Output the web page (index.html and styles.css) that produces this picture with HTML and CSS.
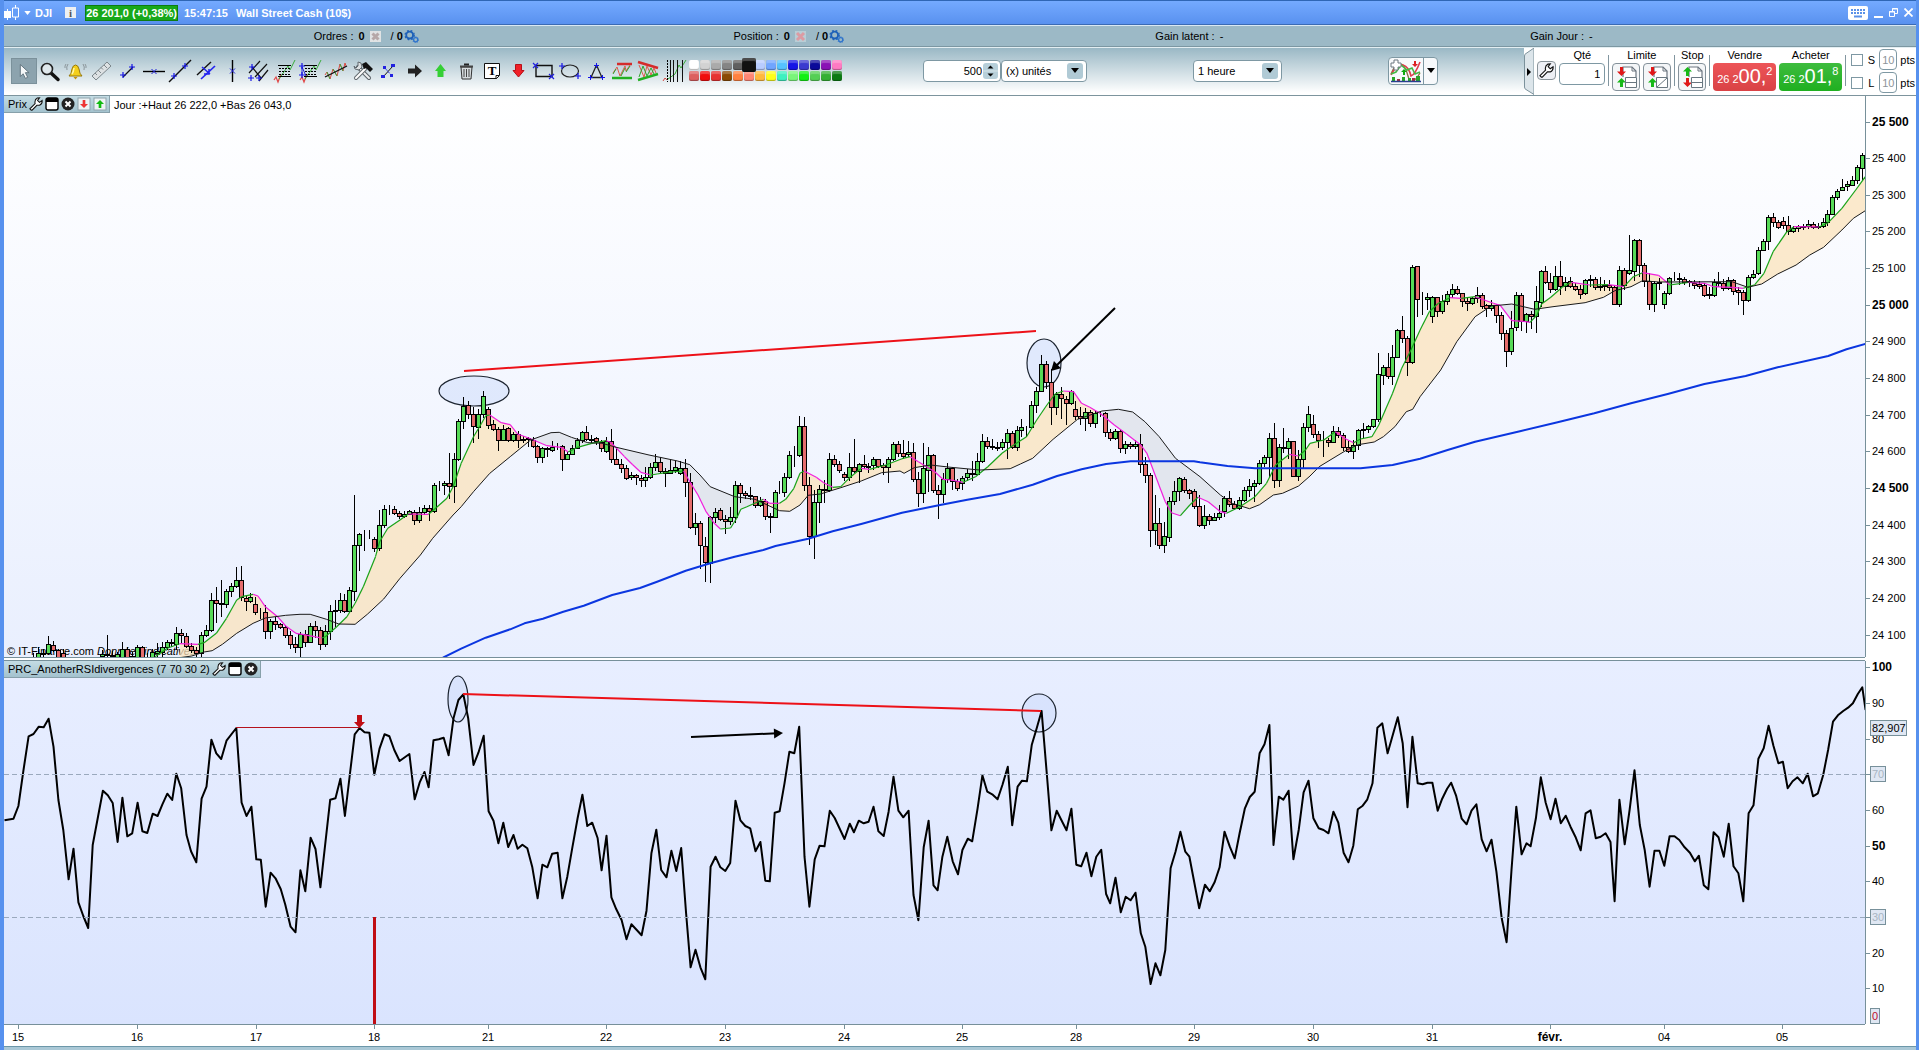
FILE: index.html
```html
<!DOCTYPE html>
<html lang="fr">
<head>
  <meta charset="UTF-8" />
  <meta name="viewport" content="width=device-width, initial-scale=1" />
  <title>DJI - Wall Street Cash (10$)</title>
  <link rel="stylesheet" href="styles.css">
</head>
<body>
  <!-- Shared icon parts -->
  <svg class="defs" width="0" height="0" aria-hidden="true">
    <defs>
      <symbol id="plus" viewBox="0 0 7 7"><path d="M3.5 0v7M0 3.5h7" stroke="#1414e6" stroke-width="1.4"/></symbol>
      <symbol id="wrench" viewBox="0 0 16 16"><path d="M2.500 15 L1 13.500 L7 7.500 Q6 3 9.500 1.200 L12 1 L9.800 4 L12 6.200 L15 4 Q15.500 8 12 9.500 L9 9.500 L3.500 15z" fill="#fff" stroke="#111" stroke-width="1.200"/></symbol>
      <symbol id="window" viewBox="0 0 14 14"><rect x="1" y="1" width="12" height="12" rx="2" fill="#fff" stroke="#000" stroke-width="1.4"/><path d="M1 1h12v4H1z"/></symbol>
      <symbol id="close" viewBox="0 0 14 14"><circle cx="7" cy="7" r="6.500" fill="#222"/><path d="M4.500 4.500l5 5M9.500 4.500l-5 5" stroke="#fff" stroke-width="2"/></symbol>
      <symbol id="down" viewBox="0 0 12 12"><path d="M4 0h4v6h4l-6 6-6-6h4z"/></symbol>
      <symbol id="up" viewBox="0 0 12 12"><path d="M4 12h4V6h4L6 0 0 6h4z"/></symbol>
      <symbol id="gears" viewBox="0 0 16 14"><circle cx="6" cy="5.500" r="3.700" fill="none" stroke="#1d60b8" stroke-width="2"/><circle cx="6" cy="5.500" r="5" fill="none" stroke="#1d60b8" stroke-width="1.300" stroke-dasharray="2 2"/><circle cx="12.500" cy="10.500" r="2.200" fill="none" stroke="#2f74cc" stroke-width="1.400"/><circle cx="12.500" cy="10.500" r="3.200" fill="none" stroke="#2f74cc" stroke-dasharray="1.200 1.200"/></symbol>
      <symbol id="caret" viewBox="0 0 8 5"><path d="M0 0h8L4 5z"/></symbol>
      <symbol id="fibo" viewBox="0 0 26 26"><path d="M3 22l2-3 2 5 3-8" fill="none" stroke="#e04848" stroke-width="1.200"/><path d="M8 21L17 8l2 4 5-10" fill="none" stroke="#39ad39"/><path d="M7 7.500h13M7 18.500h13" stroke="#000"/><path d="M8 10.500h12M8 13.500h12M8 16.500h12" stroke="#000" stroke-dasharray="2 1"/></symbol>
      <symbol id="sheet" viewBox="0 0 16 22"><path d="M1 11V1h9l4 4v6" fill="#fff" stroke="#6c7680" stroke-width="1.200"/><path d="M10 1v4h4" fill="none" stroke="#6c7680"/></symbol>
    </defs>
  </svg>

  <header class="titlebar">
    <svg class="logo" width="15" height="16" viewBox="0 0 15 16"><path d="M3.500 4v11" stroke="#fff"/><path d="M0 6h7v7H0z" fill="#fff"/><path d="M11.500 0v15" stroke="#fff"/><path d="M8.500 3h6v9h-6z" fill="#649df8" stroke="#fff"/></svg>
    <svg class="white" width="7" height="4"><use href="#caret"/></svg>
    <strong>DJI</strong>
    <button class="info" aria-label="Informations">i</button>
    <strong class="quote">26 201,0 (+0,38%)</strong>
    <strong>15:47:15</strong>
    <strong class="market">Wall Street Cash (10$)</strong>
    <div class="window-buttons">
      <button aria-label="Clavier"><svg width="20" height="14" viewBox="0 0 20 14"><rect width="20" height="14" rx="2" fill="#fff"/><path d="M3 4h14M3 7h14" stroke="#5b91e8" stroke-width="2" stroke-dasharray="2 1"/><path d="M6 10.500h8" stroke="#5b91e8" stroke-width="2"/></svg></button>
      <button aria-label="Réduire"><svg width="9" height="12"><path d="M0 10h9" stroke="#fff" stroke-width="2"/></svg></button>
      <button aria-label="Restaurer"><svg width="9" height="9" fill="none" stroke="#fff"><path d="M3.500 3V.500h5v5H6"/><path d="M.500 3.500h5v5h-5z"/><path d="M3 1h6M0 4h6"/></svg></button>
      <button aria-label="Fermer"><svg width="9" height="9"><path d="M.500.500l8 8M8.500.500l-8 8" stroke="#fff" stroke-width="1.800"/></svg></button>
    </div>
  </header>

  <section class="status">
    <div class="status-item">Ordres : <b>0</b>
      <svg width="11" height="11"><rect width="11" height="11" fill="#e0e3e4"/><path d="M2.500 2.500l6 6M8.500 2.500l-6 6" stroke="#b6a8a8" stroke-width="3"/></svg>
      <span class="total">/ <b>0</b></span><svg width="15" height="13"><use href="#gears"/></svg>
    </div>
    <div class="status-item">Position : <b>0</b>
      <svg width="11" height="11"><rect width="11" height="11" fill="#b9cdd5"/><path d="M2 2l7 7M9 2L2 9" stroke="#dc9ba3" stroke-width="3"/></svg>
      <span class="total">/ <b>0</b></span><svg width="15" height="13"><use href="#gears"/></svg>
    </div>
    <div class="status-item">Gain latent : <span>-</span></div>
    <div class="status-item">Gain Jour : <span>-</span></div>
  </section>

  <section class="toolbar">
    <div class="tools">
      <button class="active" aria-label="Curseur"><svg viewBox="0 0 26 26"><path d="M9 6v13l3-3 2.500 5 2.500-1.200-2.500-5h4z" fill="#f6f8f9" stroke="#5d7079"/></svg></button>
      <button aria-label="Loupe"><svg viewBox="0 0 26 26"><path d="M14 15l7 6.500" stroke="#111" stroke-width="3.500" stroke-linecap="round"/><circle cx="10" cy="11" r="5.500" fill="#dfe8ec" stroke="#222" stroke-width="1.600"/></svg></button>
      <button aria-label="Alerte"><svg viewBox="0 0 26 26"><path d="M6 18q2.500-2 3-7 1-4 3.500-4t3.500 4q.500 5 3 7z" fill="#f4cf1c" stroke="#97780b"/><path d="M10.500 19h4l-2 2.500z" fill="#c69208"/><path d="M11 10q-.500 4-2 6" stroke="#fff6a8" stroke-width="1.500" fill="none"/><path d="M5 6q-2 3-1 6M20 6q2 3 1 6M3 6q-1.500 2-1 4M22 6q1.500 2 1 4" stroke="#8b969b" fill="none"/></svg></button>
      <button aria-label="Règle"><svg viewBox="0 0 26 26"><path d="M3 18L18 4l4 4L7 22z" fill="#dde1e3" stroke="#7c868b"/><path d="M6 15l2 2M9 12l3 3M12 9.500l2 2M15 7l3 3" stroke="#7c868b"/></svg></button>
      <button aria-label="Segment"><svg viewBox="0 0 26 26"><path d="M8 19l10-10" stroke="#111" stroke-width="1.300"/><use href="#plus" x="5" y="14" width="6" height="6"/><use href="#plus" x="14" y="6" width="6" height="6"/></svg></button>
      <button aria-label="Ligne horizontale"><svg viewBox="0 0 26 26"><path d="M2 13.500h22" stroke="#000" stroke-width="1.400"/><path d="M10.500 11l5 5M15.500 11l-5 5" stroke="#2020d8"/></svg></button>
      <button aria-label="Droite"><svg viewBox="0 0 26 26"><path d="M2 24L24 2" stroke="#111" stroke-width="1.400"/><use href="#plus" x="4" y="15" width="6" height="6"/><use href="#plus" x="15" y="5" width="6" height="6"/></svg></button>
      <button aria-label="Parallèles"><svg viewBox="0 0 26 26"><path d="M4 17L18 4" stroke="#111" stroke-width="1.400"/><path d="M8 21L22 8" stroke="#2222f0" stroke-width="1.700"/><path d="M9 9l8 7M16 11v5h-5" stroke="#2222f0" fill="none" stroke-width="1.500"/></svg></button>
      <button aria-label="Ligne verticale"><svg viewBox="0 0 26 26"><path d="M13.500 2v22" stroke="#000" stroke-width="1.400"/><path d="M11 10.500l5 5M16 10.500l-5 5" stroke="#2020d8"/></svg></button>
      <button aria-label="Fourchette"><svg viewBox="0 0 26 26"><path d="M4 15L15 3M10 19L22 6M14 23L23 12M7 9l9 11" stroke="#111" stroke-width="1.200"/><use href="#plus" x="4" y="6" width="6" height="6"/><use href="#plus" x="3" y="17" width="6" height="6"/><use href="#plus" x="11" y="17" width="6" height="6"/></svg></button>
      <button aria-label="Fibonacci"><svg viewBox="0 0 26 26"><use href="#fibo"/></svg></button>
      <button aria-label="Extension de Fibonacci"><svg viewBox="0 0 26 26"><use href="#fibo"/><path d="M5 17V9l4 9" stroke="#2222d8" fill="none"/><use href="#plus" x="2" y="5" width="6" height="6"/><use href="#plus" x="2" y="14" width="6" height="6"/></svg></button>
      <button aria-label="Régression"><svg viewBox="0 0 26 26"><path d="M2 17l2-3 3 7 3-10 4 7 3-12 3 7 2-8 1 3" fill="none" stroke="#d94a42"/><path d="M4 14l3 7M10 11l4 7M17 6l3 7" stroke="#3aa53a"/><path d="M2 19L24 8" stroke="#111" stroke-width="1.300"/></svg></button>
      <button aria-label="Outils"><svg viewBox="0 0 26 26"><path d="M9 9L20 20" stroke="#5a6268" stroke-width="4" stroke-linecap="round"/><path d="M9 9L20 20" stroke="#eef0f1" stroke-width="2" stroke-linecap="round"/><path d="M7 20L16 11" stroke="#656d72" stroke-width="4" stroke-linecap="round"/><path d="M7 20L16 11" stroke="#fff" stroke-width="2" stroke-linecap="round"/><path d="M5 8l1 3 4 1 3-3-1-4-3-1v4l-2 2z" fill="#dce0e2" stroke="#626a70"/><path d="M13 6l4-2 7 7-3 3-4-4-2 1z" fill="#111"/></svg></button>
      <button aria-label="Segment libre"><svg viewBox="0 0 26 26"><path d="M8 19L18 8" stroke="#111"/><path d="M9 9l8 9" stroke="#2222e0" stroke-dasharray="2 1"/><path d="M6 17h4v3H6zM16 6h4v3h-4zM8 8h3v3H8zM15 16h3v3h-3z" fill="#2222e0"/></svg></button>
      <button aria-label="Flèche droite"><svg viewBox="0 0 26 26"><path d="M7 10.500h7v-4l7 6.500-7 6.500v-4H7z" fill="#222"/></svg></button>
      <button aria-label="Flèche haut"><svg viewBox="0 0 26 26"><path d="M10.500 19v-6H8l5.500-7 5.500 7h-2.500v6z" fill="#35cf35"/></svg></button>
      <button aria-label="Supprimer"><svg viewBox="0 0 26 26"><path d="M8 9h11l-1 12H9z" fill="#d7dcde" stroke="#333"/><path d="M7 8.500h13" stroke="#444" stroke-width="2"/><path d="M11 6.500h5" stroke="#222" stroke-width="2"/><path d="M11 11v8M13.500 11v8M16 11v8" stroke="#444"/></svg></button>
      <button aria-label="Texte"><svg viewBox="0 0 26 26"><path d="M5.500 5.500h15v12l-3 3h-12z" fill="#fff" stroke="#111"/><path d="M20 17.500h-3V21" fill="none" stroke="#111"/><text x="13" y="17" class="icon-text">T</text></svg></button>
      <button aria-label="Flèche bas"><svg viewBox="0 0 26 26"><path d="M10.500 6.500h6v6H19L13.500 19 8 12.500h2.500z" fill="#f02028" stroke="#b81018"/></svg></button>
      <button aria-label="Rectangle"><svg viewBox="0 0 26 26"><path d="M5 7.500h16v11H5z" fill="none" stroke="#111" stroke-width="1.400"/><path d="M2 5l5 5M7 5l-5 5M18 16l5 5M23 16l-5 5" stroke="#2222e0" stroke-width="1.200"/></svg></button>
      <button aria-label="Ellipse"><svg viewBox="0 0 26 26"><ellipse cx="13" cy="13" rx="8.500" ry="6" fill="none" stroke="#222" stroke-width="1.200"/><use href="#plus" x="2" y="5" width="6" height="6"/><use href="#plus" x="18" y="15" width="6" height="6"/></svg></button>
      <button aria-label="Triangle"><svg viewBox="0 0 26 26"><path d="M8 19.500L13.500 7 19 19.500z" fill="none" stroke="#222" stroke-width="1.300"/><use href="#plus" x="11" y="5" width="5" height="5"/><use href="#plus" x="5" y="17" width="5" height="5"/><use href="#plus" x="17" y="17" width="5" height="5"/></svg></button>
      <button aria-label="Canal"><svg viewBox="0 0 26 26"><path d="M8 6h15" stroke="#d52b2b" stroke-width="2.500"/><path d="M3 20h20" stroke="#22b022" stroke-width="2.500"/><path d="M4 15l4-6 3 9 5-10 1 5 4-6" fill="none" stroke="#de5a4c"/><path d="M4 16l3-5M12 18l4-8M17 14l4-6" stroke="#2ca52c"/></svg></button>
      <button aria-label="Biseau"><svg viewBox="0 0 26 26"><path d="M3 4l20 6" stroke="#d52b2b" stroke-width="2.500"/><path d="M3 22l20-6" stroke="#22b022" stroke-width="2.500"/><path d="M4 7l5 12 3-11 4 9 3-7 2 5" fill="none" stroke="#de5a4c"/><path d="M4 19L8 8l4 10 4-8 3 6" fill="none" stroke="#2ca52c"/></svg></button>
      <button aria-label="Cycles"><svg viewBox="0 0 26 26"><path d="M2 23l2-3 2 2" fill="none" stroke="#d54a42"/><path d="M7 21l7-5 4-9 2 3 5-8" fill="none" stroke="#37aa37"/><path d="M6.500 2v22" stroke="#000" stroke-dasharray="2 1"/><path d="M9.500 2v22M12.500 2v22M16.500 2v22M21.500 2v22" stroke="#111"/></svg></button>
    </div>

    <div class="palette" id="palette"></div>

    <div class="amount">
      <label class="number"><input type="text" value="500" aria-label="Nombre" /><svg width="15" height="16" viewBox="0 0 15 16"><rect width="15" height="16" rx="3" fill="#b7cfd9"/><path d="M4.500 5.500h6l-3-3zM4.500 10.500h6l-3 3z"/><path d="M0 8h15" stroke="#d8e6eb"/></svg></label>
      <label class="dropdown"><select aria-label="Unités"><option>(x) unités</option></select><span class="arrow"><svg width="8" height="5"><use href="#caret"/></svg></span></label>
    </div>
    <label class="dropdown period"><select aria-label="Période"><option>1 heure</option></select><span class="arrow"><svg width="8" height="5"><use href="#caret"/></svg></span></label>
    <div class="indicators">
      <button aria-label="Ajouter un indicateur"><svg width="32" height="24" viewBox="0 0 32 24"><path d="M1 15Q5 5 10 5t8 12 12-3" fill="none" stroke="#8b6f42" stroke-width="1.300"/><path d="M1 16q6-12 12-10t8 11q4-1 9-14" fill="none" stroke="#de3d4d" stroke-width="1.600"/><path d="M1 15l5-2 5-7 6 5 5-2 3 6 5-2" fill="none" stroke="#43b843" stroke-width="1.600"/><path d="M2 22v-4h3v4M12 22v-4h3v4M18 22v-3h3v3M26 22v-5h4v5" fill="#29a529"/><path d="M7 22v-2h3v2M22 22v-3h3v3" fill="#a03040"/><path d="M1 22.500h30" stroke="#273f8f" stroke-width="1.500"/><path d="M4 1h4v3h3v4H8v3H4V8H1V4h3z" fill="#fff" stroke="#6d7880"/><use href="#down" x="22" y="2" width="6" height="6" fill="#d22"/><use href="#up" x="11" y="10" width="6" height="6" fill="#1a1"/></svg></button>
      <button class="more" aria-label="Plus"><svg width="8" height="5"><use href="#caret"/></svg></button>
    </div>

    <div class="trade">
      <button class="handle" aria-label="Replier"><svg width="10" height="47" viewBox="0 0 10 47"><path d="M10 0L2 5.500Q.500 6 .500 8v31q0 2 1.500 2.500l8 5z" fill="#dce5ea" stroke="#7b919b"/><path d="M3 20v8l4-4z"/></svg></button>
      <button class="settings" aria-label="Réglages"><svg width="15" height="15"><use href="#wrench"/></svg></button>
      <div class="trade-group"><label for="qty">Qté</label><input id="qty" class="qty" type="text" value="1" /></div>
      <div class="trade-group split">
        <span>Limite</span>
        <div class="pair">
          <button class="order" aria-label="Limite"><svg width="24" height="24" viewBox="0 0 24 24"><use href="#sheet" x="8" y="1" width="16" height="22"/><use href="#down" x="3" y="2" width="9" height="9" fill="#e01818"/><use href="#up" x="3" y="13" width="9" height="9" fill="#18b818"/><path d="M11.500 12.500h11v10h-11zM11 17.500h12" fill="#fff" stroke="#697780"/></svg></button>
          <button class="order" aria-label="Limite suiveuse"><svg width="24" height="24" viewBox="0 0 24 24"><use href="#sheet" x="8" y="1" width="16" height="22"/><use href="#down" x="3" y="2" width="9" height="9" fill="#e01818"/><use href="#up" x="3" y="13" width="9" height="9" fill="#18b818"/><path d="M11.500 12.500h11v10h-11zM12 22l10-9" fill="#fff" stroke="#697780"/></svg></button>
        </div>
      </div>
      <div class="trade-group split">
        <span>Stop</span>
        <button class="order" aria-label="Stop"><svg width="24" height="24" viewBox="0 0 24 24"><use href="#sheet" x="8" y="1" width="16" height="22"/><use href="#up" x="3" y="2" width="9" height="9" fill="#18b818"/><use href="#down" x="3" y="13" width="9" height="9" fill="#e01818"/><path d="M11.500 12.500h11v10h-11zM11 17.500h12" fill="#fff" stroke="#697780"/></svg></button>
      </div>
      <div class="trade-group split"><span>Vendre</span><button class="price sell"><span>26 2</span><big>00,</big><sup>2</sup></button></div>
      <div class="trade-group"><span>Acheter</span><button class="price buy"><span>26 2</span><big>01,</big><sup>8</sup></button></div>
      <div class="protect split">
        <div class="protect-row"><input type="checkbox" id="stop-on" /><label for="stop-on">S</label><input class="points" type="text" value="10" aria-label="Points stop" /><span>pts</span></div>
        <div class="protect-row"><input type="checkbox" id="limit-on" /><label for="limit-on">L</label><input class="points" type="text" value="10" aria-label="Points limite" /><span>pts</span></div>
      </div>
    </div>
  </section>

  <main class="charts">
    <section class="panel price-panel">
      <svg class="plot" id="price-plot" viewBox="4 96 1861 561" preserveAspectRatio="none"></svg>
      <svg class="scale" id="price-scale" viewBox="1865 96 51 561" preserveAspectRatio="none"></svg>
      <div class="caption">
        <div class="tab"><span>Prix</span>
          <button aria-label="Paramètres"><svg width="14" height="14"><use href="#wrench"/></svg></button>
          <button aria-label="Fenêtre"><svg width="14" height="14"><use href="#window"/></svg></button>
          <button aria-label="Fermer"><svg width="14" height="14"><use href="#close"/></svg></button>
          <button aria-label="Descendre"><svg width="14" height="14"><rect x="1" y="1" width="12" height="12" fill="#eef3f5" stroke="#8fa3ac"/><use href="#down" x="3" y="3" width="8" height="8" fill="#e33"/></svg></button>
          <button aria-label="Monter"><svg width="14" height="14"><rect x="1" y="1" width="12" height="12" fill="#eef3f5" stroke="#8fa3ac"/><use href="#up" x="3" y="3" width="8" height="8" fill="#1b1"/></svg></button>
        </div>
        <span>Jour :+Haut 26 222,0 +Bas 26 043,0</span>
      </div>
    </section>
    <section class="panel rsi-panel">
      <svg class="plot" id="rsi-plot" viewBox="4 661 1861 363" preserveAspectRatio="none"></svg>
      <svg class="scale" id="rsi-scale" viewBox="1865 661 51 363" preserveAspectRatio="none"></svg>
      <div class="caption">
        <div class="tab"><span>PRC_AnotherRSIdivergences (7 70 30 2)</span>
          <button aria-label="Paramètres"><svg width="14" height="14"><use href="#wrench"/></svg></button>
          <button aria-label="Fenêtre"><svg width="14" height="14"><use href="#window"/></svg></button>
          <button aria-label="Fermer"><svg width="14" height="14"><use href="#close"/></svg></button>
        </div>
      </div>
    </section>
    <svg class="dates" id="dates" viewBox="4 1024 1912 22" preserveAspectRatio="none"></svg>
  </main>
  <footer class="bottom"></footer>

  <script src="charts.js"></script>
</body>
</html>
```
FILE: styles.css
```css
* {
  box-sizing: border-box;
}
body {
  margin: 0;
  height: 100vh;
  display: flex;
  flex-direction: column;
  font-family: "Liberation Sans", Arial, sans-serif;
  font-size: 11px;
  line-height: 14px;
  color: #000;
  background: #fff;
  border-left: 4px solid #5791ee;
  border-right: 3px solid #5791ee;
  overflow: hidden;
}
button {
  font: inherit;
  padding: 0;
  border: none;
  background: none;
  display: flex;
  align-items: center;
  justify-content: center;
}
input, select {
  font: inherit;
  color: #000;
  margin: 0;
  background: #fff;
  border: 1px solid #7e98a3;
  border-radius: 4px;
}
svg {
  display: block;
}
.defs {
  position: absolute;
}

/* Title bar */
.titlebar {
  display: flex;
  align-items: center;
  flex: none;
  height: 25px;
  margin: 0 -3px 0 -4px;
  padding: 0 6px 0 4px;
  color: #fff;
  background: linear-gradient(#74aaff, #5991ef);
  border-top: 1px solid #2f66b5;
  border-bottom: 1px solid #3b6bb4;
}
.white {
  fill: #fff;
  margin: 0 4px 0 5px;
}
.info {
  width: 11px;
  height: 11px;
  margin: 0 9px 0 13px;
  background: #eef0f2;
  color: #555;
  font-family: "Liberation Serif", serif;
  font-weight: bold;
}
.quote {
  margin-right: 6px;
  background: #17a81a;
  border: 1px solid #0c7c11;
}
.market {
  margin-left: 8px;
}
.window-buttons {
  display: flex;
  align-items: center;
  gap: 6px;
  margin-left: auto;
}

/* Account status */
.status {
  display: grid;
  grid-template-columns: 420fr 422fr 375fr 386fr;
  align-items: center;
  flex: none;
  height: 22px;
  padding-left: 16.2%;
  background: #9cb9c6;
  border-top: 1px solid #dbe9f3;
  border-bottom: 1px solid #7c97a2;
}
.status-item {
  display: flex;
  align-items: center;
  gap: 5px;
}
.total {
  margin: 0 -4px 0 5px;
}

/* Drawing tools */
.toolbar {
  display: flex;
  align-items: center;
  flex: none;
  height: 49px;
  padding-left: 7px;
  background: linear-gradient(#9ab8c5, #fff 95%);
  border-top: 1px solid #e3eef2;
  border-bottom: 1px solid #7d949d;
}
.tools, .palette, .amount, .period, .indicators {
  margin-bottom: 2px;
}
.tools {
  display: flex;
}
.tools button {
  width: 26px;
  height: 26px;
}
.tools svg {
  width: 26px;
  height: 26px;
}
.tools .active {
  background: #8ca3ae;
  border: 1px solid #7b919b;
}
.icon-text {
  font: bold 13px "Liberation Serif", serif;
  text-anchor: middle;
}
.palette {
  display: grid;
  grid-template-columns: repeat(14, 11px);
  grid-auto-rows: 11px;
  margin-left: 2px;
  margin-right: 80px;
}
.palette button {
  width: 10px;
  height: 10px;
  border-radius: 2px;
  box-shadow: inset 0 -1px 1px rgba(0,0,0,0.3), inset 0 3px 1px rgba(255,255,255,0.25);
}
.palette .chosen {
  width: 14px;
  height: 14px;
  margin: -2px;
  z-index: 1;
}
.amount {
  display: flex;
}
.number, .dropdown {
  display: flex;
  align-items: center;
  height: 22px;
  background: #fff;
  border: 1px solid #7e98a3;
  border-radius: 4px;
}
.number input {
  width: 58px;
  text-align: right;
  border: none;
  padding: 0;
}
.number svg {
  margin: 0 2px 0 1px;
}
.dropdown select {
  appearance: none;
  width: 65px;
  border: none;
  padding: 0 0 0 4px;
}
.arrow {
  display: flex;
  align-items: center;
  justify-content: center;
  width: 16px;
  height: 16px;
  margin-right: 3px;
  background: #b0cad5;
  border-radius: 3px;
  pointer-events: none;
}
.period {
  margin-left: 106px;
  margin-right: 106px;
}
.period select {
  width: 68px;
}
.indicators {
  display: flex;
  height: 28px;
  background: #f7f9fb;
  border: 1px solid #7e98a3;
  border-radius: 4px;
}
.indicators button {
  width: 34px;
}
.indicators .more {
  width: 14px;
  border-left: 1px solid #7e98a3;
}

/* Trading panel */
.trade {
  display: flex;
  align-items: flex-start;
  gap: 3px;
  height: 47px;
  margin-left: auto;
  padding-right: 1px;
  background: #fff;
}
.handle {
  width: 10px;
}
.settings {
  width: 19px;
  height: 19px;
  margin-top: 13px;
  background: #eef0f5;
  border: 1px solid #8a949a;
  border-radius: 4px;
}
.trade-group {
  display: flex;
  flex-direction: column;
  align-items: center;
  gap: 1px;
}
.qty {
  width: 46px;
  height: 22px;
  padding: 0 4px;
  text-align: right;
}
.split {
  padding-left: 4px;
  background: linear-gradient(#8296a0, #8296a0) 0 7px / 1px 31px no-repeat;
}
.pair {
  display: flex;
  gap: 3px;
}
.order {
  width: 28px;
  height: 28px;
  background: #f4f6f8;
  border: 1px solid #84919a;
  border-radius: 4px;
}
.price {
  width: 63px;
  height: 28px;
  align-items: baseline;
  color: #fff;
  border-radius: 4px;
}
.price big {
  font-size: 20px;
  line-height: 26px;
}
.price sup {
  font-size: 11px;
  line-height: 10px;
  align-self: flex-start;
  margin-top: 3px;
}
.sell {
  background: linear-gradient(#ed5558, #d94245);
}
.buy {
  background: linear-gradient(#3ebc3e, #1faf20);
}
.protect {
  padding-left: 6px;
}
.protect-row {
  display: flex;
  align-items: center;
  height: 23px;
  gap: 3px;
}
.protect-row input[type="checkbox"] {
  appearance: none;
  width: 12px;
  height: 12px;
  border-radius: 0;
}
.protect-row label {
  width: 10px;
  text-align: center;
}
.protect-row .points {
  width: 18px;
  height: 21px;
  padding: 0;
  text-align: center;
  color: #8d9499;
}

/* Charts */
.charts {
  flex: 1;
  min-height: 0;
  display: flex;
  flex-direction: column;
}
.panel {
  position: relative;
  display: flex;
  min-height: 0;
}
.price-panel {
  flex: 561 1 0;
  margin-bottom: 4px;
}
.rsi-panel {
  flex: 363 1 0;
}
.plot {
  flex: 1;
  min-width: 0;
  height: 100%;
  background: linear-gradient(#fff, #e9effe);
  box-shadow: 0 1px 0 #77909a, 1px 0 0 #77909a;
}
.rsi-panel .plot {
  background: linear-gradient(#e8eeff, #dae4fe);
  box-shadow: 0 -1px 0 #77909a, 0 1px 0 #77909a, 1px 0 0 #77909a;
}
.scale {
  flex: none;
  width: 51px;
  height: 100%;
}
.caption {
  position: absolute;
  top: 0;
  left: 0;
  display: flex;
  align-items: center;
  gap: 4px;
  line-height: 16px;
}
.tab {
  display: flex;
  align-items: center;
  gap: 2px;
  height: 17px;
  padding: 0 2px 1px 4px;
  background: linear-gradient(#c4dce4, #a3c2ce);
  border-right: 1px solid #87a0aa;
  border-bottom: 1px solid #87a0aa;
}
.dates {
  flex: none;
  width: 100%;
  height: 22px;
}
.bottom {
  flex: none;
  height: 4px;
  background: #aac8d6;
  border-top: 1px solid #6c97a9;
}

/* Chart marks */
.tick { stroke: #77909a; }
.axis-text { font-size: 11px; }
.axis-strong { font-size: 12px; font-weight: bold; }
.centered { text-anchor: middle; }
.wick { stroke: #000; }
.candle-up { fill: #57da57; stroke: #000; }
.candle-down { fill: #e56d6d; stroke: #000; }
.above { fill: #fbe3bb; opacity: 0.75; }
.below { fill: #dfe2ea; opacity: 0.8; }
.rising, .falling, .slow, .long, .rsi { fill: none; stroke-linejoin: round; }
.rising { stroke: #19a319; stroke-width: 1.2; }
.falling { stroke: #f21fdc; stroke-width: 1.2; }
.slow { stroke: #1a1a1a; }
.long { stroke: #0b36e0; stroke-width: 2; }
.rsi { stroke: #000; stroke-width: 2; }
.trend { stroke: #ed1118; stroke-width: 2; }
.divergence { stroke: #b5121c; stroke-width: 1; }
.signal { fill: #c00d14; }
.ring { fill: #c8d8fa; fill-opacity: 0.45; stroke: #1c2430; stroke-width: 1.2; }
.pointer { stroke: #000; stroke-width: 2; }
.level { stroke: #9aa9bd; stroke-dasharray: 5 3; }
.tag { fill: #dfe7f3; stroke: #77909a; }
.muted { fill: #a8b5c2; }
.zero { fill: #c00d2d; }
.italic { font-style: italic; }
```
FILE: charts.js
```js
const NS = 'http://www.w3.org/2000/svg';

function add(parent, tag, attrs, text) {
  const el = document.createElementNS(NS, tag);
  for (const key in attrs) el.setAttribute(key, attrs[key]);
  if (text) el.textContent = text;
  parent.appendChild(el);
  return el;
}

// A block of points has its own origin and its own horizontal unit
const left = { x: 0, y: 360, k: 2.45 };
const middle = { x: 600, y: 290, k: 2.45 };
const right = { x: 1200, y: 110, k: 2.181 };
const rsiLeft = { x: 0, y: 640, k: 2.45 };
const rsiMiddle = { x: 640, y: 640, k: 2.45 };
const rsiRight = { x: 1280, y: 640, k: 2.454 };

function points(block, data) {
  return data.trim().split(/\s+/).map((pair) => {
    const [x, y] = pair.split(',').map(Number);
    return [block.x + x / block.k, block.y + y / 3];
  });
}

function line(parent, pts, cls) {
  add(parent, 'polyline', { points: pts.map((p) => p[0].toFixed(1) + ',' + p[1].toFixed(1)).join(' '), class: cls });
}

// Candles: first x, last x, then open,close,high,low for each
const candles = [
  [left, 83, 155, `900,895,880,905 895,880,862,900 880,882,866,890 880,853,828,885 856,870,842,876 870,893,866,900 880,895,866,900`],
  [left, 252, 494, `890,884,870,895 884,886,826,895 886,890,872,895 890,882,876,895 893,868,846,895 868,895,862,898 895,890,876,898
    895,862,856,898 862,893,858,898 893,895,880,898 895,878,866,898 880,874,850,895 878,862,846,890 862,848,840,870 848,850,836,862
    853,820,801,870 820,826,806,850 829,859,820,865 858,871,850,880 871,880,860,893 880,826,815,893`],
  [left, 506, 736, `826,811,795,830 811,721,700,815 721,730,682,790 730,733,660,770 733,694,688,745 694,679,670,712 679,661,620,685
    661,712,618,724 714,724,706,754 724,712,700,730 733,757,712,764 757,757,745,778 757,814,736,838 814,784,778,838 784,793,772,811
    793,802,788,808 802,826,796,835 826,853,814,868 853,862,832,880 862,823,817,893`],
  [left, 748, 1003, `823,847,811,862 847,799,790,850 799,811,784,835 811,853,802,871 853,814,796,862 814,754,736,840 754,750,719,800
    750,721,700,760 721,754,703,760 754,691,680,757 694,556,406,724 556,523,518,634 530,531,510,574 530,531,510,536 538,565,530,577
    565,497,450,574 497,448,434,503 448,449,434,466 448,460,438,466 460,468,454,478 468,463,454,475 463,455,450,466`],
  [left, 1016, 1245, `457,481,450,494 481,458,440,490 458,445,434,466 445,454,436,484 454,377,368,460 377,378,362,394 378,371,362,404
    371,379,278,418 379,298,278,430 298,184,178,304 184,139,112,206 136,163,124,178 163,199,140,250 202,163,146,238 163,109,94,175
    148,196,142,208 194,209,180,214 208,241,200,274 241,208,196,244 206,241,200,246`],
  [left, 1258, 1498, `241,223,216,246 223,241,214,264 241,237,228,250 236,238,230,262 240,259,232,264 259,292,254,308 292,266,262,308
    266,268,260,292 270,261,244,276 260,260,250,270 260,298,256,334 298,283,272,300 283,265,256,286 265,240,234,268 240,217,214,250
    217,238,198,244 238,240,226,250 236,244,232,256 248,265,240,276 274,244,232,280 244,298,208,308`],
  [middle, 40, 270, `508,523,470,526 523,536,508,550 536,565,526,570 562,556,546,570 556,562,552,584 565,571,556,592 571,562,530,592
    562,532,520,568 532,517,492,544 517,545,502,550 545,550,534,590 549,541,510,550 541,532,514,550 550,535,512,556 535,577,508,620
    577,712,550,718 712,700,670,736 700,766,694,836 769,817,740,876 820,682,678,878`],
  [middle, 283, 526, `682,667,655,700 661,688,654,694 688,694,676,732 694,682,650,704 682,586,574,700 586,610,578,640 610,616,604,626
    616,619,592,630 619,646,618,655 646,634,622,650 634,679,628,690 679,682,670,728 682,607,600,684 607,608,574,612 608,562,550,620
    562,496,482,568 496,495,468,530 495,409,379,500 409,586,380,602 586,739,562,764 739,637,600,808`],
  [middle, 538, 780, `637,598,586,700 598,601,570,640 601,508,488,606 508,523,494,530 523,541,514,550 553,562,546,574 562,532,490,574
    532,544,446,548 544,523,518,580 523,530,496,538 530,528,520,550 526,508,500,540 508,529,506,534 526,533,520,556 533,508,500,578
    508,463,456,514 463,490,452,500 490,499,450,508 492,487,452,502 487,568,460,576 568,610,545,650`],
  [middle, 792, 1022, `610,535,458,638 541,496,472,606 496,601,492,610 601,613,586,686 613,568,550,640 568,535,520,580 535,575,530,600
    575,596,568,604 580,565,558,600 562,550,538,574 550,553,514,574 553,514,490,556 514,454,432,520 454,469,440,478 469,472,448,480
    472,474,456,484 472,457,448,480 457,430,418,506 430,472,424,478 472,421,408,484`],
  [middle, 1033, 1275, `421,412,388,440 412,412,408,440 412,346,332,418 346,304,290,370 304,223,196,306 223,278,212,296 278,352,238,404
    352,313,306,376 313,325,290,388 328,340,318,404 340,304,300,346 358,379,332,390 379,386,352,404 386,367,354,424 367,400,360,410
    400,370,364,414 370,371,364,380 370,427,366,440 427,445,418,452 445,424,416,450 424,475,420,490`],
  [middle, 1287, 1554, `475,464,454,492 464,469,456,478 469,464,450,478 464,523,432,550 523,556,500,578 556,721,550,770 721,700,616,764
    700,766,655,778 766,739,695,790 742,634,620,756 634,604,574,646 604,566,560,632 568,601,560,608 601,610,596,628 604,649,598,656
    649,706,616,710 706,679,646,718 679,691,672,704 691,682,670,694 682,670,644,690 664,625,618,680 625,644,602,650 644,655,634,660`],
  [right, 86, 291, `1195,1171,1160,1200 1171,1141,1130,1176 1141,1129,1106,1160 1129,1120,1110,1176 1120,1060,1050,1126
    1060,1042,1036,1070 1042,985,970,1105 985,1111,940,1134 1111,1012,1002,1130 1012,1015,955,1030 1015,994,985,1046
    994,1099,992,1102 1099,1048,1020,1112 1048,952,940,1074 952,913,889,965 943,973,915,985 973,991,964,1014 991,992,964,1042
    992,998,984,1010 997,964,949,1000`],
  [right, 302, 529, `964,976,950,985 976,1012,970,1022 1012,1024,994,1030 1024,1006,990,1048 1006,961,956,1020 961,958,940,985
    958,949,944,970 949,929,926,955 929,793,730,936 796,772,764,826 772,799,730,806 799,742,706,824 742,661,658,744 661,685,618,700
    685,757,678,798 757,472,466,762 470,568,468,622 568,568,546,615 568,562,550,600 619,562,558,640 562,604,560,622 604,574,556,612`],
  [right, 540, 776, `574,553,544,586 553,538,522,565 538,550,528,556 550,574,548,592 574,580,560,602 580,565,560,585 565,556,530,578
    556,588,548,598 587,595,582,620 595,586,570,602 586,616,582,640 616,670,606,690 670,724,660,770 724,655,604,734 652,556,546,664
    556,634,550,664 634,613,608,668 613,619,604,658 619,574,528,668 577,484,480,592 484,517,468,522 517,538,490,550 538,499,468,542`],
  [right, 786, 1002, `499,529,454,556 529,517,500,544 514,529,502,534 529,538,520,542 538,553,524,568 550,511,508,554 511,508,496,530
    508,532,500,540 532,530,500,542 530,526,510,542 526,532,510,544 532,583,528,584 583,481,468,592 481,526,474,540 490,481,376,494
    484,391,388,514 391,466,388,500 466,514,460,530 514,583,490,600 583,520,514,606 520,516,505,540`],
  [right, 1013, 1240, `583,550,544,596 550,505,500,556 505,506,486,514 506,508,490,524 508,517,502,526 514,518,510,530 520,526,510,538
    524,530,514,538 526,556,520,560 553,556,530,568 556,517,506,560 517,520,486,532 520,535,508,542 535,511,502,540 511,544,506,556
    541,548,530,586 547,571,540,616 571,502,496,576 502,493,480,506 490,421,410,494 421,394,388,424 394,322,316,420`],
  [right, 1251, 1445, `322,337,310,350 337,352,330,358 334,346,322,358 346,364,318,374 364,355,348,370 355,350,344,366 350,352,342,360
    349,344,330,358 344,352,336,358 352,350,340,356 349,337,324,354 337,313,300,348 313,262,254,316 262,244,236,270 242,232,208,242
    229,224,214,244 226,211,198,228 211,172,166,222 175,136,130,214`]
];

const fast = [
  ...points(left, `380,890 410,865 440,851 485,853 500,848 530,820 555,775 580,720 592,710 620,703 632,708 650,740 680,770 700,798 725,820
    745,824 770,830 788,834 797,830 825,800 850,770 870,730 890,680 920,590 930,545 950,505 980,480 1000,462 1050,463 1070,442 1095,415
    1110,380 1130,310 1160,230 1180,190 1190,167 1200,165 1228,188 1250,194 1268,222 1300,236 1340,257 1375,262 1392,276 1415,262
    1450,250 1485,242`),
  ...points(middle, `25,456 40,474 60,500 80,524 100,547 125,555 140,552 165,547 205,543 220,575 240,615 260,665 280,700 295,717 320,714
    335,685 345,658 360,650 390,634 400,628 415,640 440,640 455,628 475,595 490,550 500,543 530,562 548,578 570,592 590,590 610,565
    640,535 660,538 700,525 740,506 760,500 780,515 820,545 840,568 860,570 890,577 920,560 950,530 985,490 1010,468 1045,440 1070,390
    1095,345 1115,312 1135,303 1160,305 1180,340 1200,352 1225,370 1260,405 1290,432 1325,465 1340,490 1360,555 1385,635 1400,668
    1422,677 1445,645 1465,622 1490,635 1520,665 1535,670`),
  ...points(right, `87,1190 120,1160 145,1120 165,1065 195,1033 215,1038 230,1020 240,1000 270,990 295,965 315,985 335,998 350,987
    375,980 390,945 420,850 440,775 460,720 480,660 500,605 520,580 545,563 570,565 600,560 640,580 655,586 680,632 705,634 720,637
    735,615 745,582 765,562 790,532 810,517 850,525 890,524 925,530 945,500 965,488 1000,496 1025,525 1050,520 1065,517 1100,520
    1120,530 1160,532 1185,535 1210,524 1230,490 1250,425 1280,365 1295,350 1350,351 1370,338 1400,295 1430,240 1451,200`)
];
const slow = [
  ...points(left, `440,893 470,888 500,876 520,872 545,853 580,820 620,790 650,774 700,766 735,763 760,763 800,778 830,792 870,793
    900,763 940,717 980,655 1030,585 1060,535 1110,465 1130,440 1160,395 1200,340 1250,290 1300,240 1350,218 1370,217 1400,232
    1440,248 1475,250`),
  ...points(middle, `40,472 120,495 190,513 220,524 245,555 270,590 330,620 380,628 410,645 440,662 465,664 490,645 510,616 540,612
    590,593 640,573 690,548 735,543 745,550 770,533 810,525 860,532 930,540 1005,536 1030,522 1060,505 1110,448 1170,388 1230,363
    1270,358 1305,366 1335,395 1370,440 1410,505 1470,560 1520,615`),
  ...points(right, `70,1180 108,1196 130,1184 160,1155 180,1150 215,1128 240,1098 260,1070 290,1045 320,1020 345,1004 380,996 400,980
    425,950 450,905 464,898 480,860 525,780 560,695 600,620 635,588 680,582 730,598 770,590 840,578 880,562 905,542 940,530 965,512
    1000,516 1160,515 1195,532 1225,522 1260,492 1300,465 1330,435 1360,412 1400,360 1425,325 1451,302`)
];
const long = [
  ...points(left, `1085,893 1130,866 1190,833 1250,808 1285,790 1330,776 1380,755 1430,737 1500,705`),
  ...points(middle, `98,894 140,875 210,842 270,820 330,800 400,780 430,768 510,746 570,724 640,702 740,668 830,646 900,629 980,612
    1060,584 1120,558 1180,538 1240,522 1300,514 1455,514`),
  ...points(right, `0,1057 60,1068 120,1075 350,1075 420,1065 480,1046 540,1020 600,995 700,963 780,937 860,910 940,880 1020,852
    1100,822 1190,798 1260,772 1370,738 1410,718 1451,702`)
];
const rsi = [
  ...points(rsiLeft, `11,541 33,536 45,498 57,394 70,289 82,282 95,260 107,262 119,236 131,320 143,480 155,570 168,718 180,626 192,787
    204,828 216,864 227,615 240,530 252,452 264,466 276,489 288,606 300,473 312,589 324,580 337,488 349,574 361,579 374,521 386,528
    398,493 410,461 422,480 432,401 444,445 457,585 468,634 481,667 494,476 506,440 518,299 530,340 542,357 555,302 579,264 592,488
    604,528 616,500 628,658 639,659 651,800 663,698 675,715 688,748 699,794 712,860 724,877 736,691 748,754 761,593 773,627 785,742
    809,479 822,475 834,416 845,528 857,405 869,283 881,264 893,277 905,278 917,404 930,325 942,283 954,289 966,330 979,363 1003,342
    1016,478 1028,428 1040,396 1050,442 1062,301 1075,298 1087,293 1099,346 1111,235 1123,180 1135,163 1147,235 1160,375 1172,338
    1185,287 1197,514 1209,542 1221,610 1233,548 1245,621 1258,585 1268,626 1280,614 1292,625 1304,680 1317,775 1329,674 1341,682
    1353,641 1366,638 1378,775 1390,710 1402,625 1415,535 1427,464 1439,558 1451,548 1464,594 1474,691 1486,587 1498,772 1510,808
    1523,840 1535,898 1547,853`),
  ...points(rsiMiddle, `4,886 16,812 28,640 40,569 52,690 65,712 77,632 89,693 101,624 113,820 124,982 136,929 148,982 160,1018
    173,680 185,650 197,682 209,693 221,669 234,482 246,541 258,558 270,565 283,634 295,606 307,722 318,724 330,518 342,514 354,430
    366,335 378,340 390,260 403,650 415,800 428,658 440,617 452,619 465,512 477,534 501,597 514,551 524,577 536,542 548,550 560,545
    572,500 584,574 597,588 609,515 621,410 633,512 645,532 658,512 670,765 682,841 695,622 707,542 719,736 729,751 741,650 753,590
    766,664 779,703 790,630 803,596 814,604 827,505 839,406 851,455 863,463 876,478 888,435 901,380 912,556 925,440 936,422 948,424
    960,314 972,265 984,213 997,405 1008,571 1021,512 1045,571 1057,506 1069,674 1081,679 1094,638 1106,709 1118,650 1130,629
    1142,762 1152,790 1165,713 1178,817 1190,770 1202,781 1214,758 1227,880 1238,920 1251,1032 1263,970 1275,1006 1287,930 1300,685
    1312,635 1324,575 1336,635 1346,650 1370,805 1384,734 1396,754 1408,726 1420,682 1432,575 1445,620 1457,655 1469,580 1482,505
    1494,471 1506,455 1518,340 1530,313 1542,255 1552,615 1565,470`),
  ...points(rsiRight, `8,479 21,452 33,658 46,570 58,457 70,422 82,535 95,565 107,570 119,580 131,515 143,548 156,638 168,667 180,617
    191,508 203,497 214,479 227,430 239,263 251,250 264,340 289,232 301,310 313,502 325,290 338,430 350,433 362,428 374,428 387,512
    398,476 410,446 420,428 432,466 446,536 458,553 470,512 482,493 495,598 507,634 519,599 531,695 544,835 556,907 568,690 580,500
    593,643 605,610 615,619 628,535 640,412 652,488 664,538 676,476 689,550 701,527 713,560 725,590 738,631 750,520 762,511 775,595
    787,590 799,580 811,606 821,784 833,479 846,613 858,510 870,391 883,555 895,630 907,740 919,632 931,632 943,677 956,589 968,589
    980,600 993,622 1006,638 1018,664 1028,647 1040,736 1051,748 1064,577 1076,592 1089,650 1101,551 1113,679 1125,700 1137,784
    1150,520 1162,496 1174,356 1187,325 1199,257 1211,318 1223,370 1234,365 1246,445 1258,424 1270,412 1283,430 1295,401 1308,469
    1320,460 1333,405 1345,330 1357,245 1369,226 1382,213 1394,203 1406,190 1418,162 1429,142 1437,210`)
];

function valueAt(pts, x) {
  let i = 1;
  while (i < pts.length - 1 && pts[i][0] < x) i++;
  const [x0, y0] = pts[i - 1];
  const [x1, y1] = pts[i];
  return y0 + (y1 - y0) * (x - x0) / (x1 - x0);
}

// Shade between the two averages, one polygon per side
function drawBand(parent) {
  let run = [];
  let side = null;
  const flush = () => {
    if (run.length > 1) {
      const top = run.map((r) => r[0] + ',' + r[1].toFixed(1));
      const bottom = run.slice().reverse().map((r) => r[0] + ',' + r[2].toFixed(1));
      add(parent, 'polygon', { points: top.concat(bottom).join(' '), class: side });
    }
  };
  for (let x = 180; x <= 1865; x++) {
    const a = valueAt(fast, x);
    const b = valueAt(slow, x);
    const now = a < b ? 'above' : 'below';
    if (now !== side) {
      flush();
      run = run.slice(-1);
      side = now;
    }
    run.push([x, a, b]);
  }
  flush();
}

function drawCandles(parent) {
  for (const [block, first, last, data] of candles) {
    const rows = data.trim().split(/\s+/);
    rows.forEach((row, i) => {
      const [open, close, high, low] = row.split(',').map((v) => block.y + Number(v) / 3);
      const cx = Math.floor(block.x + (first + (last - first) * i / (rows.length - 1)) / block.k) + 0.5;
      add(parent, 'line', { x1: cx, x2: cx, y1: Math.round(high), y2: Math.round(low), class: 'wick' });
      const top = Math.floor(Math.min(open, close)) + 0.5;
      const size = Math.round(Math.abs(open - close));
      add(parent, 'rect', { x: cx - 2, y: top, width: 4, height: size, class: close < open ? 'candle-up' : 'candle-down' });
    });
  }
}

function drawArrow(parent, x1, y1, x2, y2) {
  const angle = Math.atan2(y2 - y1, x2 - x1) * 180 / Math.PI;
  const length = Math.hypot(x2 - x1, y2 - y1);
  const g = add(parent, 'g', { transform: `translate(${x1} ${y1}) rotate(${angle})` });
  add(g, 'path', { d: `M0 0H${length - 6}`, class: 'pointer' });
  add(g, 'path', { d: `M${length} 0l-9 -5v10z` });
}

const price = document.getElementById('price-plot');
add(price, 'text', { x: 7, y: 655, class: 'axis-text' }, '© IT-Finance.com');
add(price, 'text', { x: 97, y: 655, class: 'axis-text italic' }, 'Données indicatives');
add(price, 'ellipse', { cx: 474, cy: 391, rx: 35, ry: 15, class: 'ring' });
add(price, 'ellipse', { cx: 1044, cy: 363, rx: 17, ry: 24, class: 'ring' });
drawBand(price);
drawCandles(price);
for (let i = 1; i < fast.length; i++) {
  line(price, [fast[i - 1], fast[i]], fast[i][1] < fast[i - 1][1] ? 'rising' : 'falling');
}
line(price, slow, 'slow');
line(price, long, 'long');
add(price, 'line', { x1: 464, y1: 371, x2: 1036, y2: 331, class: 'trend' });
drawArrow(price, 1115, 308, 1051, 371);

const rsiPlot = document.getElementById('rsi-plot');
add(rsiPlot, 'ellipse', { cx: 458, cy: 699, rx: 10, ry: 23, class: 'ring' });
add(rsiPlot, 'ellipse', { cx: 1039, cy: 713, rx: 17, ry: 19, class: 'ring' });
line(rsiPlot, rsi, 'rsi');
for (const y of [774.5, 917.5]) add(rsiPlot, 'line', { x1: 4, x2: 1865, y1: y, y2: y, class: 'level' });
add(rsiPlot, 'line', { x1: 236, y1: 727.5, x2: 359, y2: 727.5, class: 'divergence' });
add(rsiPlot, 'path', { d: 'M357 715h5v7h3l-5.500 6-5.500-6h3z', class: 'signal' });
add(rsiPlot, 'rect', { x: 373, y: 917, width: 3, height: 107, class: 'signal' });
add(rsiPlot, 'line', { x1: 463, y1: 694, x2: 1041, y2: 711, class: 'trend' });
drawArrow(rsiPlot, 691, 737, 783, 733);

const priceScale = document.getElementById('price-scale');
for (let value = 25500; value >= 24100; value -= 100) {
  const y = Math.round(121.5 + (25500 - value) * 0.3665);
  const label = Math.floor(value / 1000) + ' ' + String(value % 1000).padStart(3, '0');
  add(priceScale, 'line', { x1: 1866, x2: 1870, y1: y + 0.5, y2: y + 0.5, class: 'tick' });
  add(priceScale, 'text', { x: 1872, y: y + 4, class: value % 500 ? 'axis-text' : 'axis-strong' }, label);
}

const rsiScale = document.getElementById('rsi-scale');
for (let value = 0; value <= 100; value += 10) {
  const y = value ? Math.round(1024 - value * 3.567) : 1016;
  const boxed = value === 70 || value === 30 || value === 0;
  if (value) add(rsiScale, 'line', { x1: 1866, x2: 1870, y1: y + 0.5, y2: y + 0.5, class: 'tick' });
  if (boxed) add(rsiScale, 'rect', { x: 1870.5, y: y - 7.5, width: value ? 15 : 9, height: 15, class: 'tag' });
  const cls = value === 0 ? 'axis-text zero' : boxed ? 'axis-text muted' : value % 50 ? 'axis-text' : 'axis-strong';
  add(rsiScale, 'text', { x: 1872, y: y + 4, class: cls }, String(value));
}
add(rsiScale, 'rect', { x: 1870.5, y: 720.5, width: 36, height: 15, class: 'tag' });
add(rsiScale, 'text', { x: 1872, y: 732, class: 'axis-text' }, '82,907');

const dates = document.getElementById('dates');
const days = [['15', 18], ['16', 137], ['17', 256], ['18', 374], ['21', 488], ['22', 606], ['23', 725], ['24', 844], ['25', 962],
  ['28', 1076], ['29', 1194], ['30', 1313], ['31', 1432], ['févr.', 1550], ['04', 1664], ['05', 1782]];
for (const [label, x] of days) {
  add(dates, 'line', { x1: x + 0.5, x2: x + 0.5, y1: 1025, y2: 1029, class: 'tick' });
  add(dates, 'text', { x: x, y: 1041, class: (label === 'févr.' ? 'axis-strong' : 'axis-text') + ' centered' }, label);
}

const colors = ['#fff', '#d2d2d2', '#aaa', '#858585', '#606060', '#111', '#b8ccff', '#70a5ff', '#55c3ff', '#1414e6', '#3b3bcf', '#0a0a99', '#8a12b5', '#ff7ac2',
  '#dc5f5f', '#f00d0d', '#e63232', '#8a4b06', '#ff8140', '#ff8674', '#ffb83d', '#ffff19', '#3df0c0', '#7af57a', '#12f012', '#55cf55', '#34b034', '#0a7a12'];
colors.forEach((color, i) => {
  const swatch = document.createElement('button');
  swatch.style.background = color;
  swatch.setAttribute('aria-label', 'Couleur ' + (i + 1));
  if (i === 5) swatch.className = 'chosen';
  document.getElementById('palette').appendChild(swatch);
});
```
